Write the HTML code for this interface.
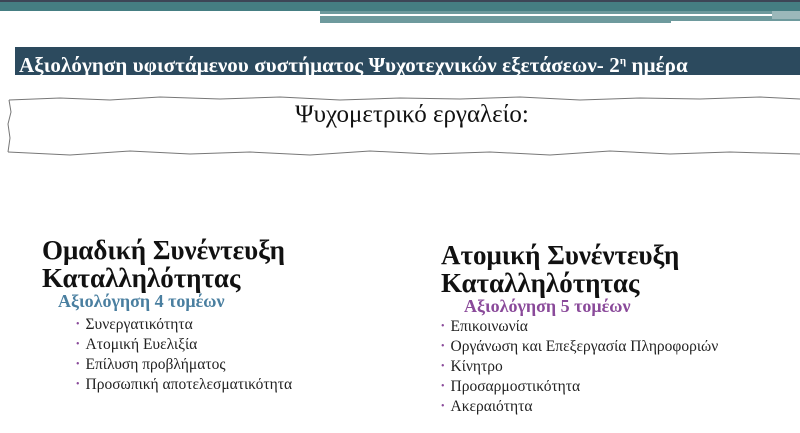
<!DOCTYPE html>
<html><head><meta charset="utf-8"><style>
body{margin:0;width:800px;height:433px;background:#fff;position:relative;overflow:hidden;font-family:"Liberation Serif",serif;}
.a{position:absolute;white-space:nowrap;}
.h{font-weight:bold;font-size:27px;color:#111;line-height:28px;}
.li{font-size:15.5px;color:#222;line-height:20px;}
.li div{height:20px;}
.li span{color:#8a4a9a;font-size:10px;line-height:10px;vertical-align:2px;margin-right:6px;}
</style></head><body>
<div class="a" style="left:0;top:0;width:800px;height:2px;background:#3d4656"></div>
<div class="a" style="left:0;top:2px;width:800px;height:9px;background:#457e82"></div>
<div class="a" style="left:320px;top:11px;width:480px;height:12px;background:#6e9a9d"></div>
<div class="a" style="left:320px;top:14px;width:452px;height:2px;background:#fff"></div>
<div class="a" style="left:772px;top:11px;width:28px;height:8px;background:#9bb8ba"></div>
<div class="a" style="left:671px;top:21px;width:129px;height:2px;background:#fff"></div>
<div class="a" style="left:15px;top:47px;width:785px;height:28px;background:#2c4a5e"></div>
<div class="a" style="left:19px;top:49px;color:#fff;font-weight:bold;font-size:21px;line-height:24px;letter-spacing:0.1px;">Αξιολόγηση υφιστάμενου συστήματος Ψυχοτεχνικών εξετάσεων- 2<sup style="font-size:11px">η</sup> ημέρα</div>
<svg class="a" style="left:0;top:94px" width="800" height="64"><polyline points="9,6 60,4 110,6 160,3 220,5 280,3 340,6 400,4 460,5 520,3 580,6 640,4 700,5 760,3 800,5" fill="none" stroke="#777"/><polyline points="9,6 11,18 8,30 10,44 8,58" fill="none" stroke="#777"/><polyline points="8,58 70,61 130,57 190,60 250,58 310,61 370,57 430,60 490,58 550,61 610,57 670,60 730,58 800,60" fill="none" stroke="#777"/></svg>
<div class="a" style="left:0;width:824px;text-align:center;top:101px;font-size:25px;color:#111;">Ψυχομετρικό εργαλείο:</div>
<div class="a h" style="left:42px;top:236px;">Ομαδική Συνέντευξη<br>Καταλληλότητας</div>
<div class="a" style="left:58px;top:291px;font-weight:bold;font-size:18px;color:#4a7fa0;">Αξιολόγηση 4 τομέων</div>
<div class="a li" style="left:76px;top:315px;"><div><span>•</span>Συνεργατικότητα</div><div><span>•</span>Ατομική Ευελιξία</div><div><span>•</span>Επίλυση προβλήματος</div><div><span>•</span>Προσωπική αποτελεσματικότητα</div></div>
<div class="a h" style="left:441px;top:241px;">Ατομική Συνέντευξη<br>Καταλληλότητας</div>
<div class="a" style="left:464px;top:296px;font-weight:bold;font-size:18px;color:#8a4a9a;">Αξιολόγηση 5 τομέων</div>
<div class="a li" style="left:441px;top:317px;"><div><span>•</span>Επικοινωνία</div><div><span>•</span>Οργάνωση και Επεξεργασία Πληροφοριών</div><div><span>•</span>Κίνητρο</div><div><span>•</span>Προσαρμοστικότητα</div><div><span>•</span>Ακεραιότητα</div></div>
</body></html>
